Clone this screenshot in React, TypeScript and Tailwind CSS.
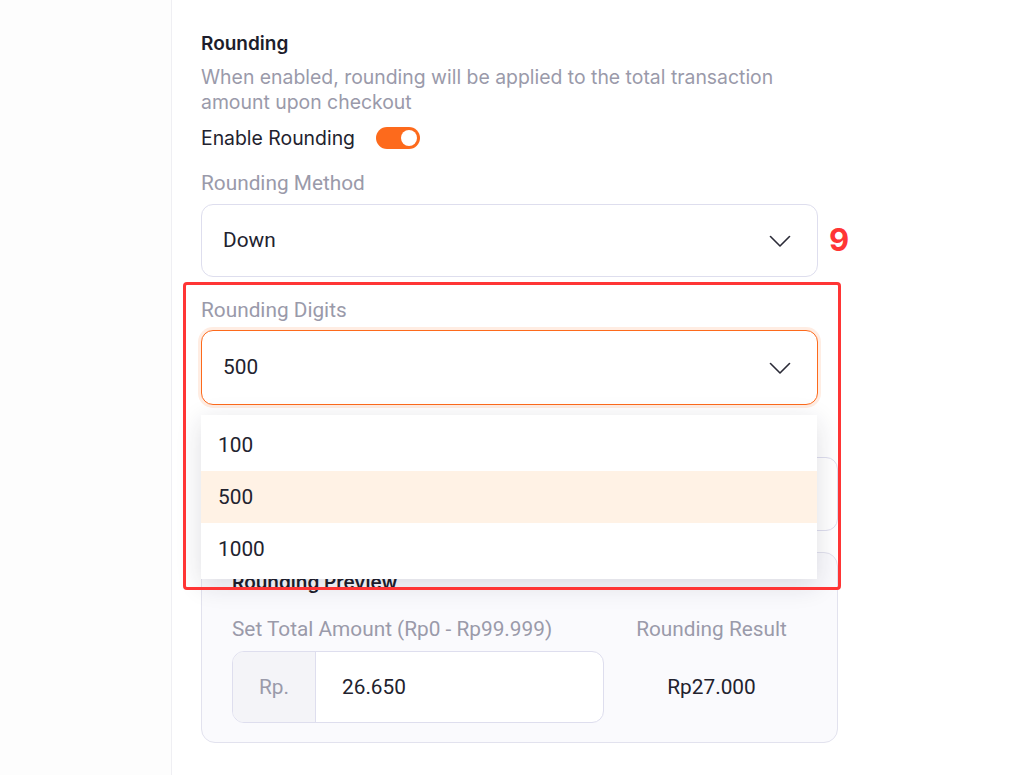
import React from "react";

function Chevron() {
  return (
    <svg width="22" height="12" viewBox="0 0 22 12" fill="none" className="shrink-0">
      <path d="M1.5 1.5l9.5 9.5 9.5-9.5" stroke="#2b2b38" strokeWidth="1.6" strokeLinecap="round" strokeLinejoin="round" />
    </svg>
  );
}

export default function App() {
  const options = ["100", "500", "1000"];
  const selected = "500";

  return (
    <div className="relative min-h-[775px] w-full flex bg-white font-['Roboto',sans-serif] text-[#22222e] overflow-hidden">
      {/* left blank column */}
      <div className="w-[172px] shrink-0 border-r border-[#efeff3] bg-[#fdfdfd]" />

      {/* settings column */}
      <div className="flex-1 pl-[29px] pt-[32px]">
        <h2 className="font-['Inter',sans-serif] text-[19px] leading-[24px] font-semibold text-[#1d1d2b]">Rounding</h2>
        <p className="mt-[9px] w-[610px] font-['Inter',sans-serif] text-[19.4px] leading-[25px] text-[#9a9aaa]">
          When enabled, rounding will be applied to the total transaction amount upon checkout
        </p>

        <div className="mt-[11px] flex items-center gap-[21px]">
          <span className="font-['Inter',sans-serif] text-[19.4px] leading-[24px] text-[#22222e]">Enable Rounding</span>
          <div className="relative h-[22px] w-[44px] rounded-full bg-[#fd6a1c]">
            <div className="absolute right-[3px] top-[3px] h-[16px] w-[16px] rounded-full bg-white" />
          </div>
        </div>

        <label className="mt-[21px] block text-[20.8px] leading-[24px] text-[#9a9aaa]">Rounding Method</label>
        <div className="mt-[9px] flex h-[73px] w-[617px] items-center justify-between rounded-[12px] border border-[#dedeee] bg-white pl-[21px] pr-[26px]">
          <span className="pt-[1px] text-[20.8px]">Down</span>
          <Chevron />
        </div>

        <label className="mt-[21px] block text-[20.8px] leading-[24px] text-[#9a9aaa]">Rounding Digits</label>
        <div className="relative mt-[8px] w-[617px]">
          <div className="flex h-[75px] items-center justify-between rounded-[12px] border-[1.5px] border-[#fd6a1c] bg-white pl-[21px] pr-[26px] shadow-[0_0_0_3px_rgba(253,106,28,0.12)]">
            <span className="pt-[1px] text-[20.8px]">{selected}</span>
            <Chevron />
          </div>

          {/* open dropdown */}
          <div className="absolute left-0 top-[85px] z-10 w-[616px] bg-white py-[4px] shadow-[0_6px_24px_rgba(30,30,60,0.14)]">
            {options.map((o) => (
              <div
                key={o}
                className={`flex h-[52px] items-center pl-[17px] pt-[2px] text-[20.8px] ${o === selected ? "bg-[#fff2e5]" : "bg-white"}`}
              >
                {o}
              </div>
            ))}
          </div>
        </div>

        {/* field hidden under the dropdown */}
        <div className="mt-[52px] h-[74px] w-[637px] rounded-[12px] border border-[#dedeee] bg-white" />

        {/* preview card */}
        <div className="mt-[21px] w-[637px] rounded-[14px] border border-[#e2e2ee] bg-[#fafafd] px-[30px] pb-[19px] pt-[18px]">
          <h3 className="font-['Inter',sans-serif] text-[19px] leading-[24px] font-semibold text-[#1d1d2b]">Rounding Preview</h3>
          <div className="mt-[22px] flex gap-[12px]">
            <div className="w-[372px]">
              <div className="text-[20.8px] leading-[24px] text-[#9a9aaa]">Set Total Amount (Rp0 - Rp99.999)</div>
              <div className="mt-[10px] flex h-[72px] overflow-hidden rounded-[12px] border border-[#dedeee] bg-white">
                <div className="flex w-[83px] items-center justify-center border-r border-[#dedeee] bg-[#f4f4f8] pt-[1px] text-[20.8px] text-[#9a9aaa]">
                  Rp.
                </div>
                <div className="flex flex-1 items-center pl-[26px] pt-[1px] text-[20.8px]">26.650</div>
              </div>
            </div>
            <div className="flex flex-1 flex-col items-center">
              <div className="text-[20.8px] leading-[24px] text-[#9a9aaa]">Rounding Result</div>
              <div className="mt-[10px] flex h-[72px] items-center pt-[1px] text-[20.8px]">Rp27.000</div>
            </div>
          </div>
        </div>
      </div>

      {/* annotation overlay */}
      <div className="pointer-events-none absolute left-[183px] top-[282px] z-20 h-[308px] w-[658px] rounded-[4px] border-[3px] border-[#ff3535]" />
      <div className="pointer-events-none absolute left-[829px] top-[221px] z-20 font-['Inter',sans-serif] text-[31px] font-bold leading-[38px] text-[#ff3535]">
        9
      </div>
    </div>
  );
}
